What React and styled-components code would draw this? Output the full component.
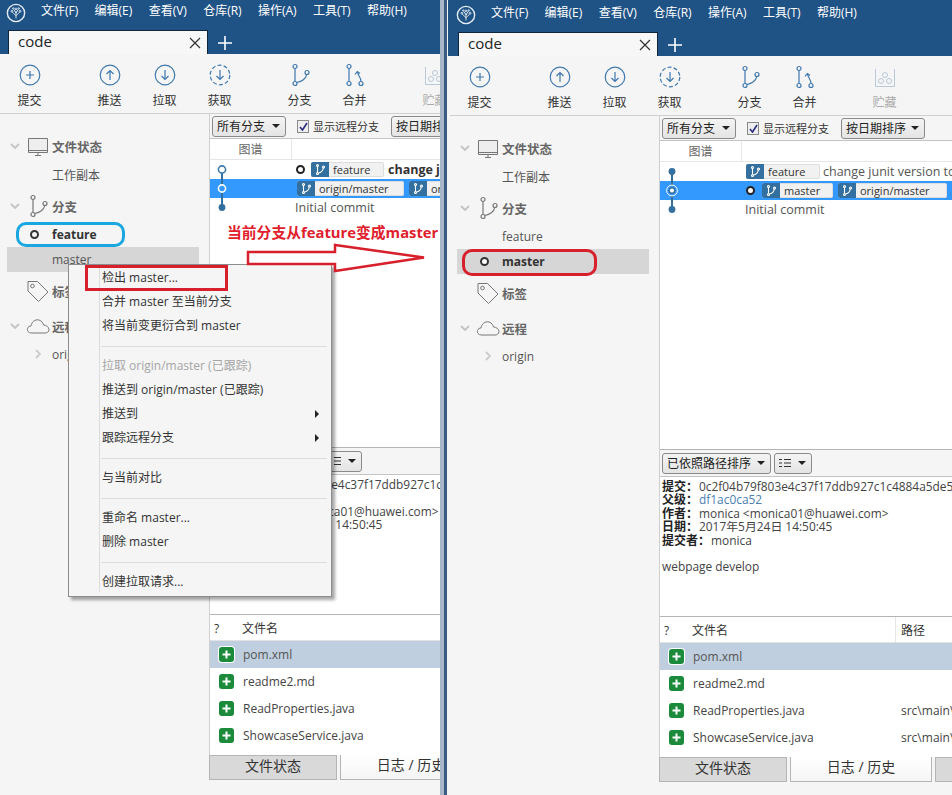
import React from "react";
import styled, { createGlobalStyle } from "styled-components";

const GlobalStyle = createGlobalStyle`
  html, body { margin: 0; padding: 0; background: #f5f5f5; }
  body {
    font-family: "Open Sans", "Noto Sans CJK SC", sans-serif;
    font-size: 12px;
    color: #333;
    overflow: hidden;
  }
`;

const Page = styled.div`
  display: flex;
  width: 952px;
  height: 795px;
  overflow: hidden;
`;

const Frame = styled.div`
  position: relative;
  flex: ${(p) => (p.$clip ? "0 0 440px" : "1 1 auto")};
  height: 795px;
  overflow: hidden;
`;

const Edge = styled.div`
  flex: 0 0 7px;
  box-sizing: border-box;
  background: #a9b8c8;
  border-right: 3px solid #3b5d85;
`;

const Inner = styled.div`
  display: flex;
  flex-direction: column;
  width: 502px;
  height: ${(p) => (p.$shift ? "797px" : "795px")};
  margin-left: ${(p) => (p.$shift ? "3px" : "0")};
`;

const TitleBar = styled.div`
  flex: none;
  background: #1f5285;
  margin-left: ${(p) => (p.$shift ? "-2px" : "0")};
  padding-top: ${(p) => (p.$shift ? "2px" : "0")};
`;

const MenuRow = styled.div`
  display: flex;
  align-items: center;
  height: 25px;
  margin-bottom: 5px;
  padding-left: ${(p) => (p.$shift ? "8px" : "6px")};
`;

const Logo = styled.svg`
  width: 20px;
  height: 20px;
  margin-right: 15px;
`;

const MenuItem = styled.span`
  flex: none;
  color: #fff;
  font-size: 12px;
  margin: 0 16.3px 5px 0;
  white-space: nowrap;
`;

const TabRow = styled.div`
  display: flex;
  align-items: flex-end;
  height: 24px;
  padding-left: ${(p) => (p.$shift ? "10px" : "8px")};
`;

const Tab = styled.div`
  box-sizing: border-box;
  display: flex;
  align-items: center;
  justify-content: space-between;
  width: 200px;
  height: 24px;
  padding: 0 6px 3px 9px;
  background: #f7f7f7;
  border: 1px solid #10263d;
  border-bottom: 0;
  font-size: 15px;
  line-height: 18px;
  color: #222;
`;

const TabClose = styled.svg`
  width: 12px;
  height: 12px;
  margin-top: 3px;
`;

const TabAdd = styled.svg`
  width: 16px;
  height: 16px;
  margin: 0 0 3px 9px;
`;

const Toolbar = styled.div`
  flex: none;
  display: flex;
  height: 60px;
  box-sizing: border-box;
  padding-left: 2px;
  background: #f5f5f5;
  border-bottom: 1px solid #cfcfcf;
`;

const ToolButton = styled.div`
  flex: none;
  display: flex;
  flex-direction: column;
  align-items: center;
  width: 55px;
  padding-top: 9px;
  margin-left: ${(p) => (p.$gap ? "25px" : "0")};
  color: ${(p) => (p.$muted ? "#aaa" : "#333")};
  font-size: 12px;
`;

const ToolIcon = styled.svg`
  width: 24px;
  height: 24px;
  margin-bottom: 4px;
`;

const Body = styled.div`
  flex: 1;
  display: flex;
  min-height: 0;
`;

const Sidebar = styled.div`
  flex: none;
  box-sizing: border-box;
  width: 210px;
  padding-top: 13px;
  background: #f5f5f5;
  border-right: 1px solid #cfcfcf;
`;

const TreeHead = styled.div`
  display: flex;
  align-items: center;
  height: 32px;
  margin-top: 3px;
  padding-left: 10px;
  font-size: 12.5px;
  font-weight: 700;
  color: #666;
`;

const TreeArrow = styled.svg`
  flex: none;
  width: 10px;
  height: 10px;
  margin-right: 6px;
`;

const TreeIcon = styled.svg`
  flex: none;
  width: 24px;
  height: 24px;
  margin-right: 2px;
`;

const TreeItem = styled.div`
  position: relative;
  display: flex;
  align-items: center;
  height: 25px;
  margin: 0 10px 0 7px;
  padding-left: 45px;
  background: ${(p) => (p.$selected ? "#d6d6d6" : "transparent")};
  font-size: 12px;
  font-weight: ${(p) => (p.$current ? 700 : 400)};
  color: ${(p) => (p.$current ? "#333" : "#555")};
`;

const CurrentDot = styled.span`
  position: absolute;
  left: 23px;
  top: 8px;
  width: 5px;
  height: 5px;
  border: 2px solid #333;
  border-radius: 50%;
  background: ${(p) => (p.$fill ? "#fff" : "transparent")};
`;

const OriginArrow = styled.svg`
  position: absolute;
  left: 26px;
  top: 7px;
  width: 10px;
  height: 10px;
`;

const Main = styled.div`
  flex: 1;
  display: flex;
  flex-direction: column;
  min-width: 0;
  background: #fff;
`;

const FilterBar = styled.div`
  flex: none;
  display: flex;
  align-items: center;
  height: 25px;
  padding-left: 2px;
  background: #f5f5f5;
  border-bottom: 1px solid #c4c4c4;
  box-sizing: border-box;
`;

const Select = styled.div`
  flex: none;
  box-sizing: border-box;
  display: flex;
  align-items: center;
  justify-content: space-between;
  width: ${(p) => p.$w}px;
  height: 21px;
  padding: 0 5px 0 4px;
  margin-left: ${(p) => p.$ml || 0}px;
  background: linear-gradient(#f4f4f4, #e4e4e4);
  border: 1px solid #8a8a8a;
  border-radius: 3px;
  font-size: 12px;
  color: #222;
  white-space: nowrap;
`;

const Caret = styled.span`
  width: 0;
  height: 0;
  border-left: 4px solid transparent;
  border-right: 4px solid transparent;
  border-top: 4px solid #222;
`;

const CheckBox = styled.span`
  flex: none;
  box-sizing: border-box;
  display: flex;
  align-items: center;
  justify-content: center;
  width: 12px;
  height: 13px;
  margin: 0 4px 0 11px;
  background: #eee;
  border: 1px solid #888;
  color: #2c2c80;
`;

const CheckLabel = styled.span`
  font-size: 11px;
  white-space: nowrap;
  color: #333;
`;

const GraphHeader = styled.div`
  flex: none;
  display: flex;
  height: 21px;
  box-sizing: border-box;
  border-bottom: 1px solid #e6e6e6;
  color: #666;
  align-items: center;
`;

const GraphHeaderCell = styled.div`
  box-sizing: border-box;
  width: 82px;
  height: 20px;
  text-align: center;
  line-height: 21px;
  border-right: 1px solid #e6e6e6;
`;

const History = styled.div`
  flex: 1;
  min-height: 0;
`;

const CommitRow = styled.div`
  display: flex;
  align-items: center;
  height: 19px;
  background: ${(p) => (p.$selected ? "#3399ff" : "transparent")};
  white-space: nowrap;
  overflow: hidden;
`;

const GraphCell = styled.svg`
  flex: none;
  width: 85px;
  height: 19px;
`;

const Head = styled.span`
  flex: none;
  box-sizing: border-box;
  width: 9px;
  height: 9px;
  margin: 0 ${(p) => p.$mr}px 0 ${(p) => p.$ml}px;
  border: 2px solid #222;
  border-radius: 50%;
  background: #fff;
`;

const Chip = styled.span`
  flex: none;
  box-sizing: border-box;
  display: flex;
  align-items: center;
  width: ${(p) => p.$w}px;
  height: 15px;
  margin: 0 ${(p) => p.$mr ?? 5}px 0 ${(p) => p.$ml || 0}px;
  background: #f1f1f1;
  border: 1px solid #ddd;
  border-left: 0;
  border-radius: 2px;
  font-size: 11px;
  color: #333;
`;

const ChipIcon = styled.svg`
  flex: none;
  width: 18px;
  height: 15px;
  margin-right: 4px;
  background: #33709f;
  border-radius: 2px 0 0 2px;
`;

const Message = styled.span`
  font-size: 12.5px;
  font-weight: ${(p) => (p.$bold ? 700 : 400)};
  color: ${(p) => (p.$bold ? "#333" : "#555")};
`;

const DetailBar = styled.div`
  flex: none;
  display: flex;
  align-items: center;
  height: 28px;
  box-sizing: border-box;
  padding-left: 2px;
  background: #f5f5f5;
  border-top: 1px solid #b4b4b4;
  border-bottom: 1px solid #c4c4c4;
`;

const ListGlyph = styled.svg`
  width: 12px;
  height: 10px;
`;

const DetailText = styled.div`
  flex: none;
  box-sizing: border-box;
  height: 140px;
  padding: 3px 0 0 2px;
  font-size: 11.9px;
  line-height: 13.4px;
  white-space: nowrap;
  overflow: hidden;
  color: #444;
  border-bottom: 1px solid #b4b4b4;
`;

const DetailLabel = styled.b`
  font-size: 12px;
  margin-right: 1px;
  color: #222;
`;

const ParentLink = styled.span`
  color: #4a7eb0;
`;

const CommitNote = styled.div`
  margin-top: 13.4px;
`;

const FileHeader = styled.div`
  flex: none;
  display: flex;
  align-items: center;
  height: 26px;
  box-sizing: border-box;
  background: #fff;
  border-bottom: 1px solid #e2e2e2;
  color: #333;
`;

const FileHeaderCell = styled.div`
  flex: none;
  box-sizing: border-box;
  width: ${(p) => p.$w}px;
  height: 25px;
  line-height: 27px;
  padding-left: ${(p) => p.$pl}px;
  border-right: ${(p) => (p.$line ? "1px solid #e6e6e6" : "0")};
`;

const FileRow = styled.div`
  display: flex;
  align-items: center;
  height: 27px;
  padding-left: 9px;
  background: ${(p) => (p.$selected ? "#bfcfdf" : "transparent")};
  font-size: 12px;
  color: ${(p) => (p.$selected ? "#555" : "#444")};
`;

const AddedBadge = styled.span`
  flex: none;
  box-sizing: border-box;
  display: flex;
  align-items: center;
  justify-content: center;
  width: 15px;
  height: 15px;
  margin-right: 9px;
  background: #1b8a3a;
  border-radius: 3px;
  box-shadow: ${(p) => (p.$selected ? "0 0 0 1px #fff" : "none")};
`;

const FileName = styled.span`
  flex: none;
  width: 208px;
`;

const FileList = styled.div`
  flex: none;
  height: 114px;
`;

const BottomTabs = styled.div`
  flex: none;
  display: flex;
  height: 40px;
  background: #f5f5f5;
  margin-left: -1px;
`;

const BottomTab = styled.div`
  flex: none;
  box-sizing: border-box;
  width: ${(p) => p.$w}px;
  height: 25px;
  margin-right: 3px;
  text-align: center;
  line-height: 20px;
  font-size: 14px;
  color: #333;
  background: ${(p) => (p.$active ? "linear-gradient(#fff, #f5f5f5)" : "#d9d9d9")};
  border: 1px solid #b5b5b5;
  border-top: ${(p) => (p.$active ? "0" : "1px solid #b5b5b5")};
`;

const Annotation = styled.div`
  position: absolute;
  left: ${(p) => p.$x}px;
  top: ${(p) => p.$y}px;
  width: ${(p) => p.$w}px;
  height: ${(p) => p.$h}px;
  box-sizing: border-box;
  border: 3px solid ${(p) => p.$color};
  border-radius: ${(p) => (p.$square ? "0" : "10px")};
  pointer-events: none;
`;

const Callout = styled.div`
  position: absolute;
  left: 227px;
  top: 221px;
  color: #e0202c;
  font-size: 14.8px;
  font-weight: 700;
  white-space: nowrap;
`;

const BigArrow = styled.svg`
  position: absolute;
  left: 246px;
  top: 243px;
  width: 180px;
  height: 34px;
`;

const ContextMenu = styled.div`
  position: absolute;
  left: 68px;
  top: 264px;
  box-sizing: border-box;
  width: 264px;
  height: 333px;
  padding-top: 1px;
  background: #f5f5f5;
  border: 1px solid #8c8c8c;
  box-shadow: 3px 3px 3px rgba(0, 0, 0, 0.35);
  &::before {
    content: "";
    position: absolute;
    left: 30px;
    top: 2px;
    bottom: 4px;
    width: 1px;
    background: #dcdcdc;
  }
`;

const ContextItem = styled.div`
  position: relative;
  height: 24px;
  line-height: 24px;
  padding-left: 33px;
  font-size: 12px;
  white-space: nowrap;
  color: ${(p) => (p.$disabled ? "#a5a5a5" : "#333")};
`;

const SubArrow = styled.span`
  position: absolute;
  right: 12px;
  top: 8px;
  width: 0;
  height: 0;
  border-top: 4px solid transparent;
  border-bottom: 4px solid transparent;
  border-left: 4px solid #222;
`;

const ContextDivider = styled.div`
  height: 1px;
  margin: 8px 4px 7px 32px;
  background: #dcdcdc;
`;

const BLUE = "#3f78ad";
const GRAY = "#777";

const CircleTool = ({ dashed, children }) => (
  <ToolIcon viewBox="0 0 24 24" fill="none" stroke={BLUE} strokeWidth="1.2">
    <circle cx="12" cy="12" r="9.8" strokeDasharray={dashed ? "4 2.2" : undefined} />
    {children}
  </ToolIcon>
);

const BranchShape = ({ color }) => (
  <g fill="none" stroke={color} strokeWidth="1.2">
    <circle cx="7" cy="3.5" r="2" />
    <circle cx="7" cy="20.5" r="2" />
    <circle cx="19" cy="9.5" r="2" />
    <path d="M7 5.5V18.5M8.5 19.5C13 19 18 16 18.8 11.5" />
  </g>
);

const toolbarIcons = {
  commit: (
    <CircleTool>
      <path d="M12 8v8M8 12h8" />
    </CircleTool>
  ),
  push: (
    <CircleTool>
      <path d="M12 17V8M8.5 11L12 7.5 15.5 11" />
    </CircleTool>
  ),
  pull: (
    <CircleTool>
      <path d="M12 7v9M8.5 13L12 16.5 15.5 13" />
    </CircleTool>
  ),
  fetch: (
    <CircleTool dashed>
      <path d="M12 7v9M8.5 13L12 16.5 15.5 13" />
    </CircleTool>
  ),
  branch: (
    <ToolIcon viewBox="0 0 24 24">
      <BranchShape color={BLUE} />
    </ToolIcon>
  ),
  merge: (
    <ToolIcon viewBox="0 0 24 24" fill="none" stroke={BLUE} strokeWidth="1.2">
      <circle cx="6" cy="3.5" r="2" />
      <circle cx="6" cy="20.5" r="2" />
      <circle cx="18" cy="20.5" r="2" />
      <path d="M6 5.5V18.5M18 18.5C18 14 15 13 14.5 9M12 11.5L14.3 8.5 17 10.5" />
    </ToolIcon>
  ),
  stash: (
    <ToolIcon viewBox="0 0 24 24" fill="none" stroke="#b9c9d9" strokeWidth="1">
      <path d="M2.5 4V21.5H21.5V4" />
      <circle cx="8" cy="16" r="2.5" />
      <circle cx="16" cy="16" r="2.5" />
      <circle cx="12" cy="10" r="2.5" />
    </ToolIcon>
  ),
};

const tools = [
  { key: "commit", label: "提交" },
  { key: "push", label: "推送", gap: true },
  { key: "pull", label: "拉取" },
  { key: "fetch", label: "获取" },
  { key: "branch", label: "分支", gap: true },
  { key: "merge", label: "合并" },
  { key: "stash", label: "贮藏", gap: true, muted: true },
];

const menus = ["文件(F)", "编辑(E)", "查看(V)", "仓库(R)", "操作(A)", "工具(T)", "帮助(H)"];

const Arrow = ({ open }) => (
  <TreeArrow viewBox="0 0 10 10" fill="none" stroke="#c4c4c4" strokeWidth="1.8">
    {open ? <path d="M1 3l4 4 4-4" /> : <path d="M3 1l4 4-4 4" />}
  </TreeArrow>
);

const ChipGlyph = () => (
  <ChipIcon viewBox="0 0 18 15" fill="none" stroke="#fff" strokeWidth="1.1">
    <circle cx="6.500" cy="3.500" r="1" />
    <circle cx="6.500" cy="11.500" r="1" />
    <circle cx="12.500" cy="5" r="1" />
    <path d="M6.500 4.500V10.500M7.500 11C10 11 12 8.500 12.300 6" />
  </ChipIcon>
);

const BranchChip = ({ width, left, gap, children }) => (
  <Chip $w={width} $ml={left} $mr={gap}>
    <ChipGlyph />
    {children}
  </Chip>
);

const GraphNode = ({ kind, selected, top, bottom }) => (
  <GraphCell viewBox="0 0 85 19">
    {top && <line x1="12" y1="0" x2="12" y2="8" stroke="#33709f" strokeWidth="2" />}
    {bottom && <line x1="12" y1="10" x2="12" y2="19" stroke="#33709f" strokeWidth="2" />}
    {kind === "filled" && <circle cx="12" cy="9.5" r="3.4" fill="#33709f" />}
    {kind === "ring" && (
      <circle cx="12" cy="9.5" r="3.6" fill={selected ? "#3399ff" : "#fff"} stroke={selected ? "#fff" : "#3f78ad"} strokeWidth="1.6" />
    )}
    {kind === "double" && (
      <>
        <circle cx="12" cy="9.5" r="5.4" fill="#3399ff" stroke="#fff" strokeWidth="1" />
        <circle cx="12" cy="9.5" r="2.8" fill="#fff" stroke="#33709f" strokeWidth="1.4" />
      </>
    )}
  </GraphCell>
);

const PlusGlyph = () => (
  <svg width="9" height="9" viewBox="0 0 9 9">
    <path d="M4.5 0.5v8M0.5 4.5h8" stroke="#fff" strokeWidth="2" />
  </svg>
);

const files = [
  { name: "pom.xml", path: "", selected: true },
  { name: "readme2.md", path: "" },
  { name: "ReadProperties.java", path: "src\\main\\java\\com" },
  { name: "ShowcaseService.java", path: "src\\main\\java\\com" },
];

function Tree({ after }) {
  return (
    <Sidebar>
      <TreeHead>
        <Arrow open />
        <TreeIcon viewBox="0 0 24 24" fill="#eee" stroke={GRAY} strokeWidth="1">
          <path d="M2.5 4.5h19v14h-19zM2.5 16.5h19M9 21.5h6M12 18.5v3" />
        </TreeIcon>
        文件状态
      </TreeHead>
      <TreeItem>工作副本</TreeItem>
      <TreeHead>
        <Arrow open />
        <TreeIcon viewBox="0 0 24 24">
          <BranchShape color={GRAY} />
        </TreeIcon>
        分支
      </TreeHead>
      <TreeItem $current={!after}>
        {!after && <CurrentDot />}
        feature
      </TreeItem>
      <TreeItem $selected $current={after}>
        {after && <CurrentDot $fill />}
        master
      </TreeItem>
      <TreeHead>
        <TreeArrow viewBox="0 0 10 10" />
        <TreeIcon viewBox="0 0 24 24" fill="none" stroke={GRAY} strokeWidth="1">
          <path d="M2 2.5h9.5L22 13 12.5 22.5 2 12z" />
          <circle cx="6.5" cy="7" r="1.8" />
        </TreeIcon>
        标签
      </TreeHead>
      <TreeHead>
        <Arrow open />
        <TreeIcon viewBox="0 0 24 24" fill="none" stroke={GRAY} strokeWidth="1">
          <path d="M6 19C2 19 1 16.500 1.500 14.500 2 12.500 4 12 5 12 5.500 8 9 5 13 6 16 7 17 9 17.500 11 20 11 23 13 23 15.500 23 18 21 19 19 19z" />
        </TreeIcon>
        远程
      </TreeHead>
      <TreeItem>
        <OriginArrow viewBox="0 0 10 10" fill="none" stroke="#ccc" strokeWidth="1.8">
          <path d="M3 1l4 4-4 4" />
        </OriginArrow>
        origin
      </TreeItem>
    </Sidebar>
  );
}

function Commits({ after }) {
  return (
    <History>
      <CommitRow>
        <GraphNode kind={after ? "filled" : "ring"} bottom />
        {!after && <Head $ml={1} $mr={6} />}
        <BranchChip width={after ? 74 : 73} left={after ? 1 : 0} gap={after ? 3 : 4}>feature</BranchChip>
        <Message $bold={!after}>change junit version to</Message>
      </CommitRow>
      <CommitRow $selected>
        <GraphNode kind={after ? "double" : "ring"} selected top bottom />
        {after && <Head $ml={1} $mr={7} />}
        {after && <BranchChip width={71}>master</BranchChip>}
        <BranchChip width={after ? 109 : 107} left={after ? 0 : 2}>origin/master</BranchChip>
        <BranchChip width={107}>origin/HEAD</BranchChip>
      </CommitRow>
      <CommitRow>
        <GraphNode kind="filled" top />
        <Message>Initial commit</Message>
      </CommitRow>
    </History>
  );
}

function RepoWindow({ after }) {
  return (
    <Inner $shift={after}>
      <TitleBar $shift={after}>
        <MenuRow $shift={after}>
          <Logo viewBox="0 0 22 22" fill="none" stroke="#e6eef5" strokeWidth="1">
            <circle cx="11" cy="11" r="9.5" strokeWidth="1.5" />
            <path d="M11 17V9M11 14L7 10M11 14l4-4M11 11L8.500 7M11 11l2.500-4" />
            <circle cx="6.500" cy="9" r="1" />
            <circle cx="15.500" cy="9" r="1" />
            <circle cx="11" cy="6.500" r="1" />
            <circle cx="8" cy="6" r="0.8" />
            <circle cx="14" cy="6" r="0.8" />
          </Logo>
          {menus.map((m) => (
            <MenuItem key={m}>{m}</MenuItem>
          ))}
        </MenuRow>
        <TabRow $shift={after}>
          <Tab>
            code
            <TabClose viewBox="0 0 12 12">
              <path d="M1 1l10 10M11 1L1 11" stroke="#333" strokeWidth="1.2" />
            </TabClose>
          </Tab>
          <TabAdd viewBox="0 0 16 16">
            <path d="M8 1v14M1 8h14" stroke="#fff" strokeWidth="1.6" />
          </TabAdd>
        </TabRow>
      </TitleBar>
      <Toolbar>
        {tools.map((t) => (
          <ToolButton key={t.key} $gap={t.gap} $muted={t.muted}>
            {toolbarIcons[t.key]}
            {t.label}
          </ToolButton>
        ))}
      </Toolbar>
      <Body>
        <Tree after={after} />
        <Main>
          <FilterBar>
            <Select $w={74}>
              所有分支
              <Caret />
            </Select>
            <CheckBox>
              <svg width="9" height="9" viewBox="0 0 9 9">
                <path d="M1 5l2.500 3L8 1" fill="none" stroke="#2c2c80" strokeWidth="1.6" />
              </svg>
            </CheckBox>
            <CheckLabel>显示远程分支</CheckLabel>
            <Select $w={84} $ml={12}>
              按日期排序
              <Caret />
            </Select>
          </FilterBar>
          <GraphHeader>
            <GraphHeaderCell>图谱</GraphHeaderCell>
          </GraphHeader>
          <Commits after={after} />
          <DetailBar>
            <Select $w={109}>
              已依照路径排序
              <Caret />
            </Select>
            <Select $w={38} $ml={3}>
              <ListGlyph viewBox="0 0 12 10" stroke="#333" strokeWidth="1">
                <path d="M0 1.500h3M5 1.500h7M0 5h3M5 5h7M0 8.500h3M5 8.500h7" />
              </ListGlyph>
              <Caret />
            </Select>
          </DetailBar>
          <DetailText>
            <div>
              <DetailLabel>提交：</DetailLabel>0c2f04b79f803e4c37f17ddb927c1c4884a5de5
            </div>
            <div>
              <DetailLabel>父级：</DetailLabel><ParentLink>df1ac0ca52</ParentLink>
            </div>
            <div>
              <DetailLabel>作者：</DetailLabel>monica &lt;monica01@huawei.com&gt;
            </div>
            <div>
              <DetailLabel>日期：</DetailLabel>2017年5月24日 14:50:45
            </div>
            <div>
              <DetailLabel>提交者：</DetailLabel>monica
            </div>
            <CommitNote>webpage develop</CommitNote>
          </DetailText>
          <FileHeader>
            <FileHeaderCell $w={32} $pl={4}>?</FileHeaderCell>
            <FileHeaderCell $w={204} $pl={0} $line>文件名</FileHeaderCell>
            <FileHeaderCell $w={56} $pl={5}>路径</FileHeaderCell>
          </FileHeader>
          <FileList>
            {files.map((f) => (
              <FileRow key={f.name} $selected={f.selected}>
                <AddedBadge $selected={f.selected}>
                  <PlusGlyph />
                </AddedBadge>
                <FileName>{f.name}</FileName>
                {f.path}
              </FileRow>
            ))}
          </FileList>
          <BottomTabs>
            <BottomTab $w={128}>文件状态</BottomTab>
            <BottomTab $w={142} $active>日志 / 历史</BottomTab>
            <BottomTab $w={128}>搜索</BottomTab>
          </BottomTabs>
        </Main>
      </Body>
    </Inner>
  );
}

export default function App() {
  return (
    <Page>
      <GlobalStyle />
      <Frame $clip>
        <RepoWindow />
        <Annotation $x={16} $y={222} $w={109} $h={25} $color="#1aa7e0" />
        <Callout>当前分支从feature变成master</Callout>
        <ContextMenu>
          <ContextItem>检出 master...</ContextItem>
          <ContextItem>合并 master 至当前分支</ContextItem>
          <ContextItem>将当前变更衍合到 master</ContextItem>
          <ContextDivider />
          <ContextItem $disabled>拉取 origin/master (已跟踪)</ContextItem>
          <ContextItem>推送到 origin/master (已跟踪)</ContextItem>
          <ContextItem>
            推送到
            <SubArrow />
          </ContextItem>
          <ContextItem>
            跟踪远程分支
            <SubArrow />
          </ContextItem>
          <ContextDivider />
          <ContextItem>与当前对比</ContextItem>
          <ContextDivider />
          <ContextItem>重命名 master...</ContextItem>
          <ContextItem>删除 master</ContextItem>
          <ContextDivider />
          <ContextItem>创建拉取请求...</ContextItem>
        </ContextMenu>
        <BigArrow viewBox="0 0 180 34" fill="#fff" stroke="#d8202c" strokeWidth="2.500">
          <path d="M2 9H89V2L178 14.500 89 28V21H2z" />
        </BigArrow>
        <Annotation $x={85} $y={265} $w={143} $h={26} $color="#d8202c" $square />
      </Frame>
      <Edge />
      <Frame>
        <RepoWindow after />
        <Annotation $x={15} $y={249} $w={135} $h={27} $color="#d8202c" />
      </Frame>
    </Page>
  );
}
